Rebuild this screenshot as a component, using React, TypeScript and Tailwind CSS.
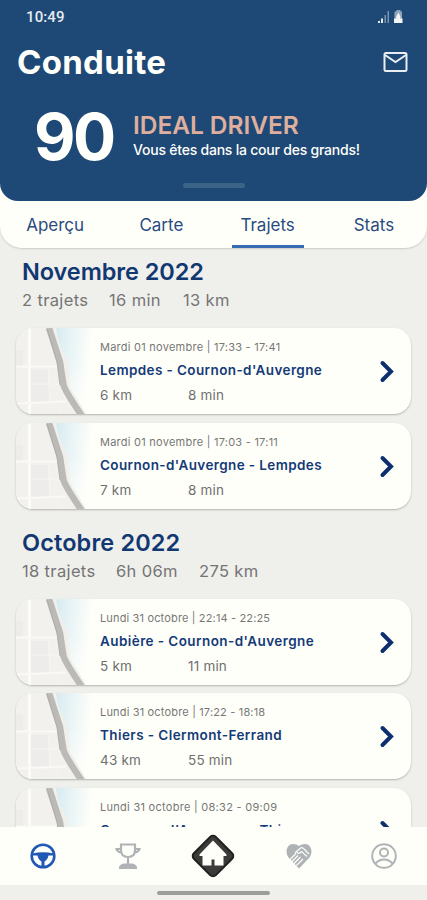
import React from "react";

type Trip = { date: string; title: string; dateCls: string; titleCls: string; km?: string; time?: string };

const november: Trip[] = [
  { date: "Mardi 01 novembre | 17:33 - 17:41", title: "Lempdes - Cournon-d'Auvergne", dateCls: "tracking-[0.25px]", titleCls: "tracking-[0.39px]", km: "6 km", time: "8 min" },
  { date: "Mardi 01 novembre | 17:03 - 17:11", title: "Cournon-d'Auvergne - Lempdes", dateCls: "tracking-[0.25px]", titleCls: "tracking-[0.38px]", km: "7 km", time: "8 min" },
];

const october: Trip[] = [
  { date: "Lundi 31 octobre | 22:14 - 22:25", title: "Aubière - Cournon-d'Auvergne", dateCls: "tracking-[0.15px]", titleCls: "tracking-[0.42px]", km: "5 km", time: "11 min" },
  { date: "Lundi 31 octobre | 17:22 - 18:18", title: "Thiers - Clermont-Ferrand", dateCls: "tracking-[0.17px]", titleCls: "tracking-[0.42px]", km: "43 km", time: "55 min" },
  { date: "Lundi 31 octobre | 08:32 - 09:09", title: "Cournon-d'Auvergne - Thiers", dateCls: "tracking-[0.28px]", titleCls: "tracking-[0.39px]" },
];

function MapThumb({ id }: { id: string }) {
  return (
    <svg width="84" height="86" viewBox="0 0 84 86" className="shrink-0">
      <defs>
        <linearGradient id={id} x1="0" x2="1" y1="0" y2="0.1">
          <stop offset="0.45" stopColor="#d5eaf1" />
          <stop offset="0.92" stopColor="#fffffa" />
        </linearGradient>
        <linearGradient id={id + "f"} x1="0" x2="0" y1="0" y2="1">
          <stop offset="0.4" stopColor="#fffffa" stopOpacity="0" />
          <stop offset="1" stopColor="#fffffa" stopOpacity="0.65" />
        </linearGradient>
      </defs>
      <rect width="84" height="86" fill={`url(#${id})`} />
      <rect width="84" height="86" fill={`url(#${id}f)`} />
      <path d="M0 0H40L43 20L51 34L53 58L70 86H0Z" fill="#f2f1ee" />
      <path d="M0 22h7v17H0zM15 42h18v32H15z" fill="#edecea" />
      <path d="M13.500 0V86" stroke="#fcfbf8" strokeWidth="3" />
      <path d="M0 38.500H46M0 75.500L50 73.500" stroke="#faf9f6" strokeWidth="2" fill="none" />
      <path d="M32 39L34 74M38 74L46 86M16 56H46" stroke="#f6f5f2" strokeWidth="1" fill="none" />
      <path d="M36 0L43 20L50 34L52 60L68 86" stroke="#f1efea" strokeWidth="4" fill="none" />
      <path d="M33 0L44 34L47.500 57Q49 63 66 88" stroke="#bcbab7" strokeWidth="6.500" fill="none" />
      <path d="M31 0L41 34L44 57" stroke="#aeadab" strokeWidth="1" fill="none" />
    </svg>
  );
}

function TripCard({ trip, id }: { trip: Trip; id: string }) {
  return (
    <div className="flex h-[86px] shrink-0 overflow-hidden rounded-[17px] bg-[#fffffa] shadow-[0_1px_2px_rgba(0,0,0,0.25)]">
      <MapThumb id={id} />
      <div className="flex flex-1 flex-col whitespace-nowrap pt-[11px]">
        <div className={`h-4 text-[11px] leading-4 text-[#777776] ${trip.dateCls}`}>{trip.date}</div>
        <div className={`mt-[7px] h-4 text-[13.500px] font-semibold leading-4 text-[#143a78] ${trip.titleCls}`}>{trip.title}</div>
        {trip.km && (
          <div className="mt-[9px] flex text-[13.500px] leading-4 tracking-[0.2px] text-[#6f6f6f]">
            <span className="w-[88px]">{trip.km}</span>
            <span>{trip.time}</span>
          </div>
        )}
      </div>
      <svg width="38" height="86" viewBox="0 0 38 86" className="shrink-0">
        <path d="M9.500 35L18 43.500L9.500 52" fill="none" stroke="#0d2f6e" strokeWidth="4" strokeLinecap="round" />
      </svg>
    </div>
  );
}

function MonthHeader({ title, cls, items }: { title: string; cls: string; items: { t: string; w: string }[] }) {
  return (
    <div className="whitespace-nowrap pl-[6px]">
      <h2 className={`text-[23.500px] font-semibold leading-7 text-[#123872] ${cls}`}>{title}</h2>
      <div className="mt-[2px] flex text-[16.500px] leading-6 tracking-[0.35px] text-[#757574]">
        {items.map((i) => (
          <span key={i.t} className={`shrink-0 ${i.w}`}>{i.t}</span>
        ))}
      </div>
    </div>
  );
}

export default function App() {
  return (
    <div className="flex h-[900px] w-[427px] flex-col overflow-hidden bg-[#efefec] font-['Inter','Liberation_Sans',sans-serif]">
      <div className="h-[248px] shrink-0 rounded-b-[22px] bg-[#fffffa] shadow-[0_1px_2px_rgba(0,0,0,0.15)]">
        <header className="flex h-[201px] flex-col whitespace-nowrap rounded-b-[18px] bg-[#1e4976] text-[#fffffb]">
          <div className="flex h-[34px] items-center justify-between pl-[26px] pr-[23px]">
            <span className="font-['Roboto',sans-serif] text-[15px] font-medium tracking-[0.1px] text-[#e6ebf0]">10:49</span>
            <svg width="26" height="16" viewBox="0 0 26 16">
              <path d="M0 14V12h2v2zM3 14V9.500h2V14z" fill="#e6ebf0" />
              <path d="M6.500 14V6h1.500v8zM9.500 14V2h1.500v12z" fill="#7893ad" />
              <path d="M18.500 1h4v1.500h1.500v11h-7.500V2.500h2z" fill="#91a6bb" />
              <path d="M16 9.500H18.500L18 8L20.500 3.500L22.500 8L22 9.500h2.500v4.500H16z" fill="#f3f4f5" />
            </svg>
          </div>
          <div className="flex h-[56px] items-center justify-between pl-[17px] pr-[19px]">
            <h1 className="text-[33px] font-bold leading-10 tracking-[0.3px]">Conduite</h1>
            <svg width="25" height="20" viewBox="0 0 25 20" fill="none" stroke="#e9eef3" strokeWidth="2">
              <rect x="1.500" y="1" width="22" height="18" rx="1.500" />
              <path d="M2 3L12.500 10L23 3" />
            </svg>
          </div>
          <div className="flex h-[93px] pl-[34px]">
            <div className="w-[99px] pt-[11px] text-[64px] font-bold leading-[72px] tracking-[-2.500px]">90</div>
            <div className="pt-[21px]">
              <div className="text-[24.500px] font-semibold leading-7 tracking-[-0.05px] text-[#dfae9d]">IDEAL DRIVER</div>
              <div className="mt-px text-[14px] font-medium leading-5 tracking-[-0.22px]">Vous êtes dans la cour des grands!</div>
            </div>
          </div>
          <div className="ml-[183px] h-[5px] w-[62px] rounded-full bg-[#3b6386]" />
        </header>
        <nav className="grid h-[47px] grid-cols-4 pl-[2px] text-center text-[17px] leading-6 text-[#294b80]">
          <span className="pt-3">Aperçu</span>
          <span className="pt-3">Carte</span>
          <span className="mx-auto h-[47px] w-[72px] border-b-[3px] border-[#386bb5] pt-3">Trajets</span>
          <span className="pt-3">Stats</span>
        </nav>
      </div>

      <main className="flex min-h-0 flex-1 flex-col overflow-hidden px-4 pt-[10px]">
        <MonthHeader title="Novembre 2022" cls="tracking-[-0.08px]" items={[{ t: "2 trajets", w: "w-[87px]" }, { t: "16 min", w: "w-[74px]" }, { t: "13 km", w: "" }]} />
        <div className="mt-4 flex shrink-0 flex-col gap-[8.500px]">
          {november.map((t, i) => <TripCard key={i} trip={t} id={"n" + i} />)}
        </div>
        <div className="h-5 shrink-0" />
        <MonthHeader title="Octobre 2022" cls="tracking-[0.12px]" items={[{ t: "18 trajets", w: "w-[94px]" }, { t: "6h 06m", w: "w-[83px]" }, { t: "275 km", w: "" }]} />
        <div className="mt-4 flex shrink-0 flex-col gap-[8.500px]">
          {october.map((t, i) => <TripCard key={i} trip={t} id={"o" + i} />)}
        </div>
      </main>

      <footer className="h-[73px] shrink-0">
        <div className="grid h-[58px] grid-cols-5 place-items-center bg-[#fffffa]">
          <svg width="26" height="26" viewBox="0 0 26 26">
            <circle cx="13" cy="13" r="11.300" fill="none" stroke="#2059b5" strokeWidth="2.600" />
            <path d="M2.500 10.500Q13 8 23.500 10.500V12.500H18.500Q17.500 17 14.500 18.500V24H11.500V18.500Q8.500 17 7.500 12.500H2.500Z" fill="#2059b5" />
          </svg>
          <svg width="26" height="26" viewBox="0 0 26 26" fill="none" stroke="#afb3b5" strokeWidth="2.200">
            <path d="M6 1.500H20V7Q20 14 13 14Q6 14 6 7ZM6 6H1.500Q2 8.500 7 10M20 6H24.500Q24 8.500 19 10M13 14V21" />
            <path d="M4 26V24Q5 21 9 20.500H17Q21 21 22 24V26Z" fill="#afb3b5" stroke="none" />
          </svg>
          <svg width="48" height="48" viewBox="0 0 48 48">
            <rect x="8.500" y="8.500" width="31" height="31" rx="4" transform="rotate(45 24 24)" fill="#3d3b39" stroke="#20201f" strokeWidth="2" />
            <path d="M24 8.500L37.500 22.500V24H34.500V33.500H25.500V27.500H22.500V33.500H13.500V24H10.500V22.500Z" fill="#fffffa" />
          </svg>
          <svg width="26" height="26" viewBox="0 0 26 26">
            <path d="M13 25.500L2.500 14.500C-1.500 9 1 1 7 1Q10.500 1 13 3Q15.500 1 19 1C25 1 27.500 9 23.500 14.500Z" fill="#aeb3b5" />
            <path d="M9 10L14.500 5Q16.500 4 18 6L23 11M11 9.500Q13 11.500 15.500 8.500L21 13.500M4 16.500L10 10.500M6 18.500L12 12.500M8 20.500L14.500 14M10.500 22.500L17 16" fill="none" stroke="#fffffa" strokeWidth="1.200" />
          </svg>
          <svg width="26" height="26" viewBox="0 0 26 26" fill="none" stroke="#aeb2b4" strokeWidth="1.900">
            <circle cx="13" cy="13" r="11.800" /><circle cx="13" cy="9.500" r="4" />
            <path d="M4.500 20.500Q8 16.500 13 16.500Q18 16.500 21.500 20.500" />
          </svg>
        </div>
        <div className="mx-auto mt-[6px] h-[4px] w-[113px] rounded-full bg-[#9d9d9b]" />
      </footer>
    </div>
  );
}
